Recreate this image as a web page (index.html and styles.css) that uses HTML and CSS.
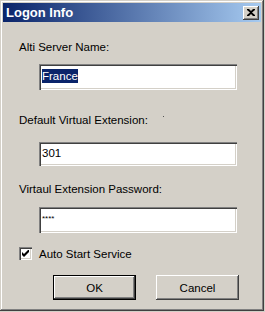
FILE: index.html
```html
<!DOCTYPE html>
<html lang="en">
<head>
    <meta charset="UTF-8">
    <title>Logon Info</title>
    <link rel="stylesheet" href="styles.css">
</head>
<body>
    <div class="window">
        <div class="title-bar">
            <span class="title">Logon Info</span>
            <button class="close-btn" aria-label="Close">
                <svg width="8" height="7" viewBox="0 0 8 7">
                    <path d="M0 0h2l2 2 2-2h2v1L5 3.5 8 6v1H6L4 5 2 7H0V6l3-2.5L0 1z" fill="#000"/>
                </svg>
            </button>
        </div>

        <div class="content">
            <div class="field-label">Alti Server Name:</div>
            <div class="text-box"><span class="selected">France</span></div>

            <div class="field-label second">Default Virtual Extension:<span class="speck"></span></div>
            <div class="text-box short">301</div>

            <div class="field-label third">Virtaul Extension Password:</div>
            <div class="text-box password">****</div>

            <label class="check-row">
                <span class="check-box">
                    <svg width="7" height="7" viewBox="0 0 7 7">
                        <path d="M0 2v3l2 2 5-5V-1L2 4z" fill="#000"/>
                    </svg>
                </span>
                Auto Start Service
            </label>

            <div class="buttons">
                <button class="push-btn default">OK</button>
                <button class="push-btn">Cancel</button>
            </div>
        </div>
    </div>
</body>
</html>
```

FILE: styles.css
```css
:root {
    --face: #d4d0c8;
    --shadow: #808080;
    --dark: #404040;
    --light: #ffffff;
    --select: #0a246a;
}

body {
    margin: 0;
    background: var(--face);
    font-family: 'Liberation Sans', Arial, sans-serif;
    font-size: 11.5px;
    color: #000;
}

.window {
    width: 264px;
    height: 311px;
    box-sizing: border-box;
    padding: 3px;
    background: var(--face);
    box-shadow: inset -1px -1px var(--dark), inset 1px 1px var(--face),
                inset -2px -2px var(--shadow), inset 2px 2px var(--light);
}

/* title bar */
.title-bar {
    height: 19px;
    display: flex;
    align-items: center;
    justify-content: space-between;
    padding: 0 2px 0 3px;
    background: linear-gradient(to right, #0a246a, #a6caf0);
}

.title {
    color: #fff;
    font-weight: bold;
    font-size: 13px;
}

.close-btn {
    width: 16px;
    height: 14px;
    padding: 0;
    border: none;
    display: flex;
    align-items: center;
    justify-content: center;
    background: var(--face);
    box-shadow: inset -1px -1px var(--dark), inset 1px 1px var(--light),
                inset -2px -2px var(--shadow);
}

/* form */
.content {
    padding: 19px 0 0 16px;
}

.field-label {
    line-height: 13px;
    height: 13px;
}

.field-label.second {
    margin-top: 24px;
    position: relative;
}

.field-label.third {
    margin-top: 17px;
}

.speck {
    position: absolute;
    left: 144px;
    top: 2px;
    width: 1px;
    height: 1px;
    background: #555;
}

.text-box {
    width: 198px;
    height: 26px;
    box-sizing: border-box;
    margin: 10px 0 0 20px;
    padding: 5px 0 0 3px;
    background: #fff;
    line-height: 15px;
    box-shadow: inset 1px 1px var(--shadow), inset 2px 2px var(--dark),
                inset -1px -1px var(--light), inset -2px -2px var(--face);
}

.text-box.short {
    height: 24px;
    margin-top: 15px;
    padding-top: 4px;
}

.text-box.password {
    margin-top: 11px;
    font-size: 8px;
    padding-top: 4px;
}

.selected {
    background: var(--select);
    color: #fff;
    padding: 1px 0;
}

.check-row {
    display: flex;
    align-items: center;
    gap: 7px;
    margin-top: 14px;
    height: 13px;
}

.check-box {
    width: 13px;
    height: 13px;
    box-sizing: border-box;
    display: flex;
    align-items: center;
    justify-content: center;
    background: #fff;
    box-shadow: inset 1px 1px var(--shadow), inset 2px 2px var(--dark),
                inset -1px -1px var(--light), inset -2px -2px var(--face);
}

.buttons {
    display: flex;
    gap: 20px;
    margin: 15px 0 0 34px;
}

.push-btn {
    width: 83px;
    height: 25px;
    padding: 0;
    border: none;
    background: var(--face);
    font-family: 'Liberation Sans', Arial, sans-serif;
    font-size: 11.5px;
    color: #000;
    box-shadow: inset -1px -1px var(--dark), inset 1px 1px var(--light),
                inset -2px -2px var(--shadow), inset 2px 2px var(--face);
}

.push-btn.default {
    box-shadow: inset 0 0 0 1px #000, inset -2px -2px var(--dark), inset 2px 2px var(--light),
                inset -3px -3px var(--shadow);
}
```
